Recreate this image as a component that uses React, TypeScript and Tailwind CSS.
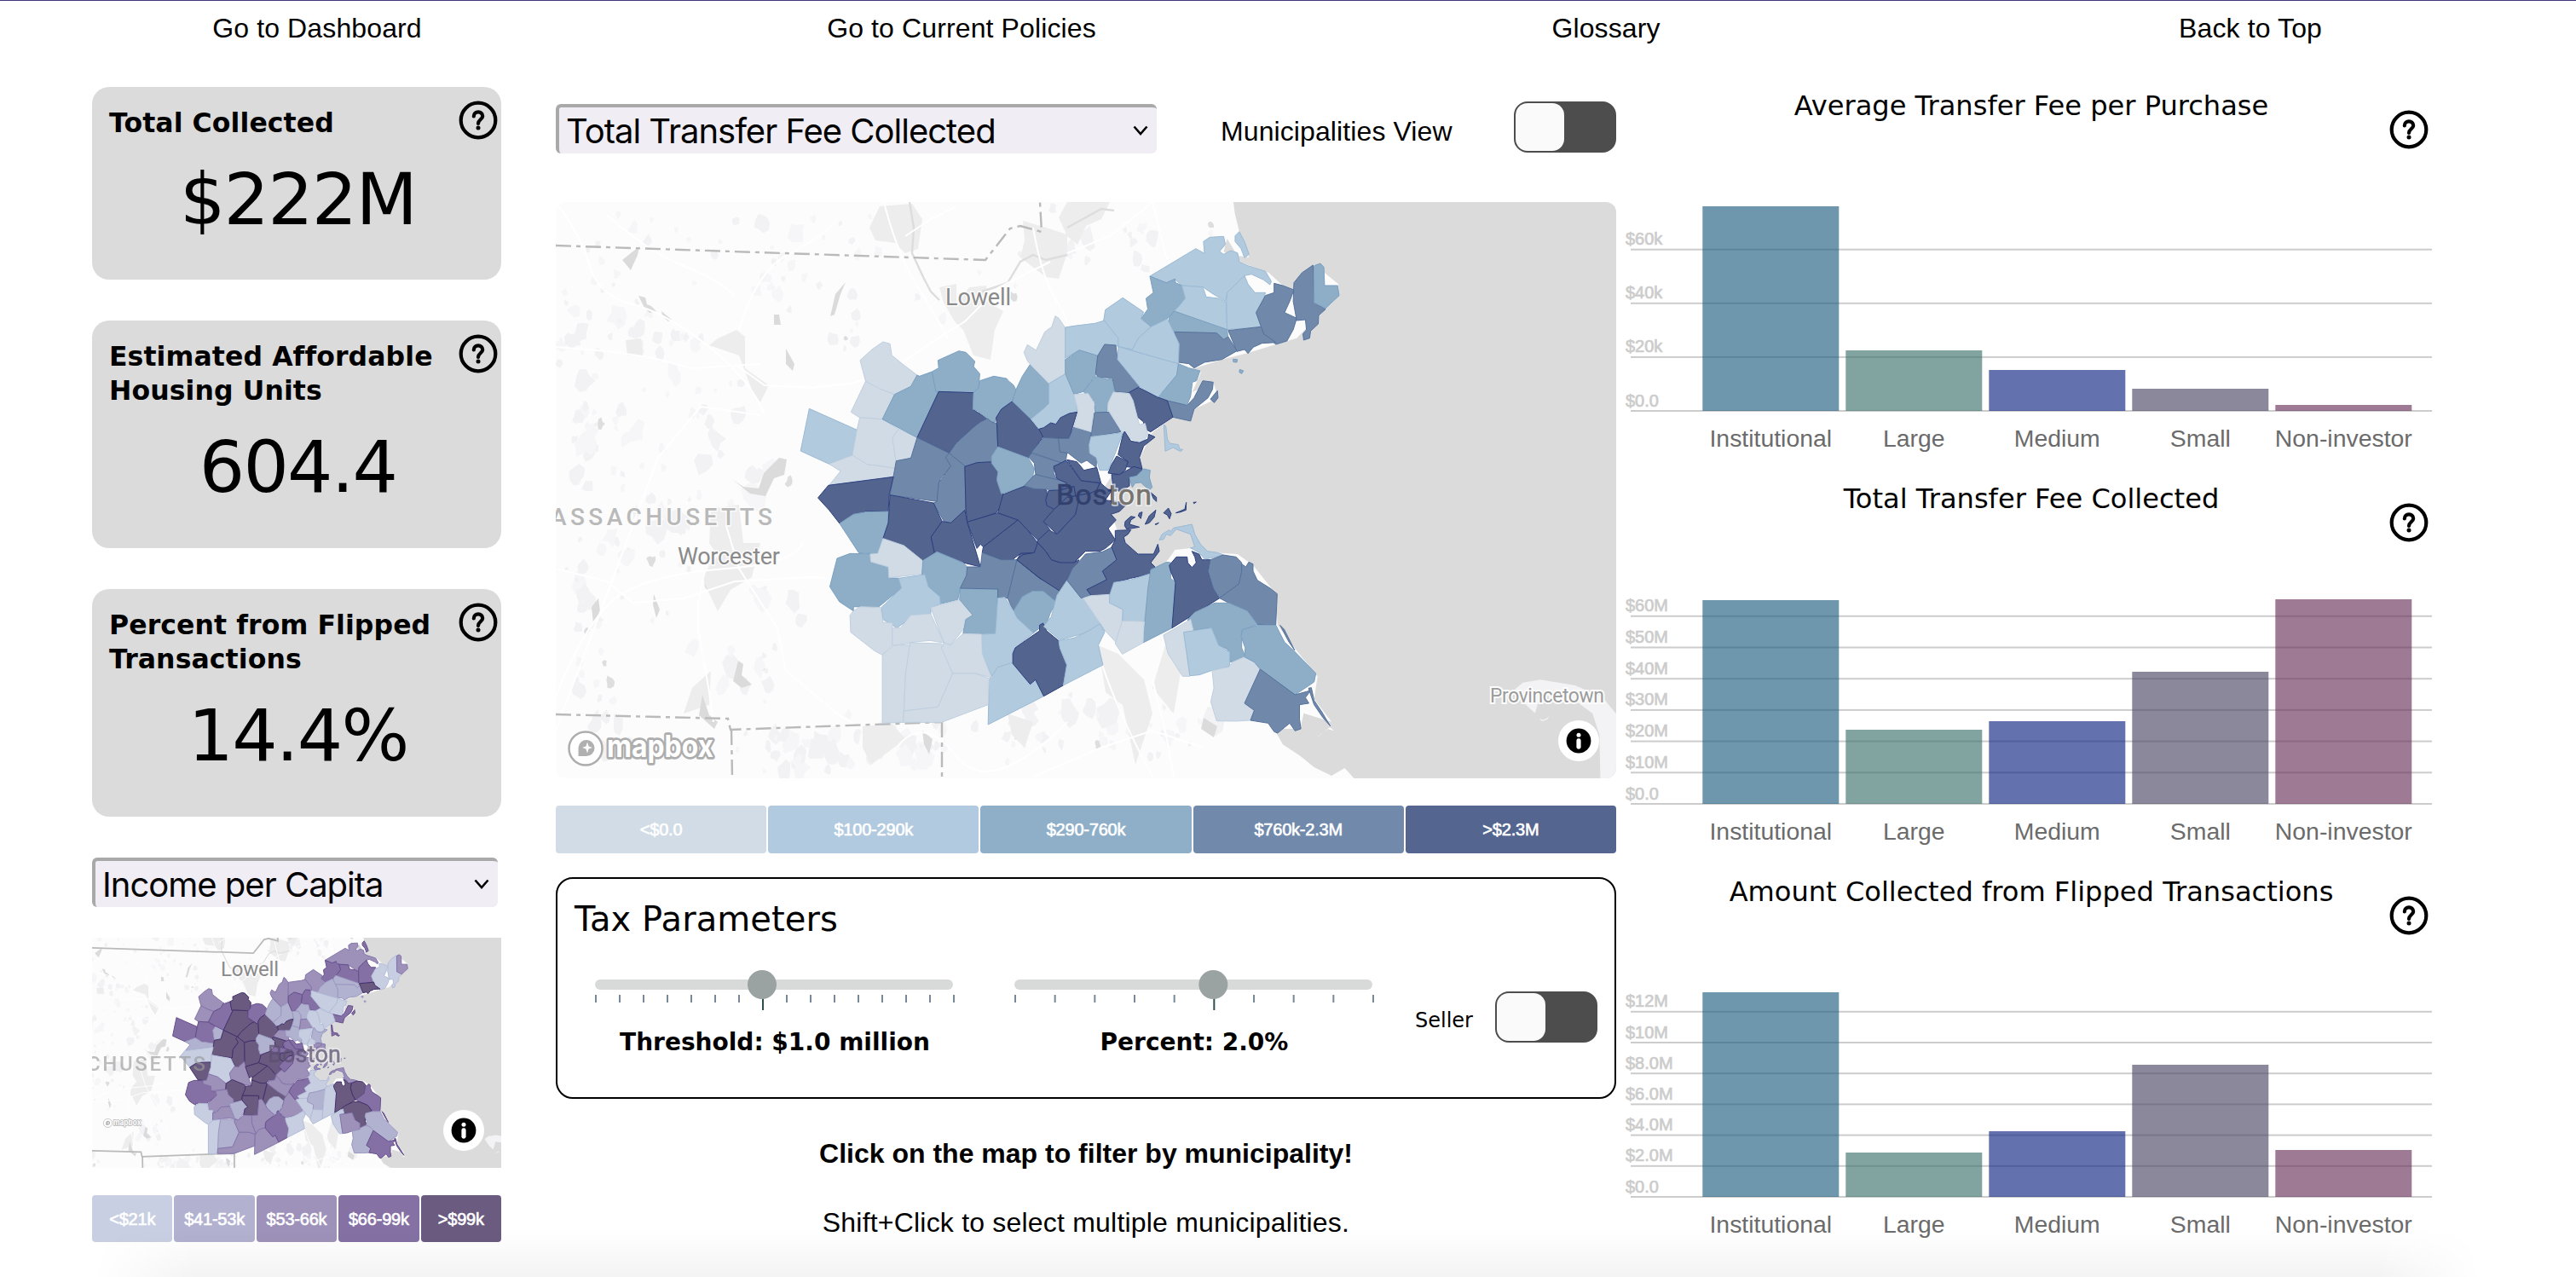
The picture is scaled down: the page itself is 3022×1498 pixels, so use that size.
import React from "react";

/* ------------------------------------------------------------------ */
/* Map data                                                            */
/* ------------------------------------------------------------------ */

const BLUES = ["#d1dbe6", "#b1cade", "#8eaec8", "#7089aa", "#53648e"];
const BLUE_LINES = ["#bfcfdf", "#9bbad5", "#7a9fbf", "#56729c", "#2c407f"];
const PURPLES = ["#c7cee2", "#b1b1d0", "#9d91ba", "#8470a4", "#6a5a80"];
const PURPLE_LINES = ["#b3bdd8", "#9b98c1", "#8375aa", "#664f8d", "#43316b"];

type Town = [number, number, string];

/* Survey sheets: every sheet keeps its towns in its own local grid. */
const SHEETS: { transform: string; towns: Town[] }[] = [
  {
    transform: "translate(-12 -17) scale(0.408163 0.333333)",
    towns: [
      [1, 3, "758,778 895,853 882,942 815,973 733,927"],
      [0, 2, "904,608 938,570 970,543 990,550 995,590 1030,625 1068,660 1050,700 1003,728 960,708 920,682"],
      [0, 2, "920,682 960,708 1003,728 968,815 903,810 878,790"],
      [0, 3, "903,810 968,815 1015,850 997,880 1007,962 1003,988 950,978 925,975 882,942 895,853"],
      [0, 1, "1015,850 1068,880 1050,952 1007,962 997,880"],
      [0, 1, "882,942 925,975 950,978 1003,988 1002,1017 815,1048 848,998 815,973"],
      [2, 3, "1111,648 1122,718 1130,718 1068,880 968,815 1003,728 1050,700 1068,660 1075,664"],
      [2, 4, "1128,608 1188,575 1208,580 1234,612 1230,630 1248,655 1245,705 1230,722 1122,718 1111,648 1130,635"],
      [4, 4, "1130,718 1230,722 1228,780 1240,790 1270,813 1250,825 1232,842 1180,900 1160,935 1068,880"],
      [2, 3, "1248,680 1288,664 1325,672 1330,680 1345,695 1352,712 1342,752 1310,780 1295,810 1292,825 1282,825 1240,785 1228,780 1230,722 1245,705"],
      [3, 4, "1270,813 1282,825 1297,830 1300,912 1282,945 1290,965 1240,968 1207,982 1160,935 1180,900 1232,842 1250,825"],
      [4, 4, "1342,752 1390,810 1432,873 1405,920 1388,952 1300,912 1297,830 1295,810 1310,780"],
      [2, 1, "1393,622 1447,690 1447,760 1430,780 1395,815 1342,752 1352,712 1370,665"],
      [0, 2, "1375,580 1385,553 1410,573 1435,508 1455,490 1465,452 1475,460 1493,492 1500,530 1493,600 1495,655 1447,690 1393,622 1385,610"],
      [1, 1, "1495,655 1525,740 1528,790 1480,810 1467,830 1432,850 1418,850 1395,815 1430,780 1447,760 1447,690"],
      [4, 4, "1528,790 1505,883 1432,883 1418,850 1432,845 1452,828 1467,833 1480,810 1505,795"],
      [3, 4, "1068,880 1160,935 1150,950 1165,980 1135,1025 1130,1040 1125,1105 990,1082 1008,962 1050,952"],
      [3, 4, "1160,935 1205,980 1208,1130 1200,1170 1150,1185 1115,1110 1125,1105 1130,1040 1165,980 1150,950"],
      [4, 4, "1205,982 1240,968 1290,965 1300,1000 1297,1030 1315,1080 1315,1110 1295,1145 1212,1178 1208,1130"],
      [2, 1, "1300,912 1388,952 1405,990 1400,1018 1377,1050 1310,1078 1297,1030 1300,1000 1282,970 1282,945"],
    ],
  },
  {
    transform: "translate(-12 323) scale(0.408163 0.333333)",
    towns: [
      [4, 0, "813,28 1000,-2 988,60 985,120 920,120 845,162 815,115 783,72"],
      [2, 4, "845,162 885,130 920,122 985,120 985,165 970,215 955,270 900,265"],
      [4, 0, "990,62 1115,90 1140,155 1108,210 1118,265 1085,292 1045,262 970,215 985,160"],
      [4, 2, "1140,155 1165,160 1205,115 1212,157 1250,315 1200,300 1120,282 1118,265 1108,210"],
      [4, 4, "1212,157 1300,125 1358,150 1258,245 1250,235 1240,250"],
      [4, 4, "1300,125 1315,60 1390,25 1440,45 1445,95 1470,115 1432,155 1450,185 1418,225 1385,185 1358,150"],
      [4, 4, "1358,150 1385,185 1418,235 1405,265 1365,268 1340,292 1310,290 1255,265 1258,245"],
      [2, 3, "838,285 875,268 955,270 935,295 985,315 987,353 1018,355 1023,390 955,458 885,455 885,470 845,438 817,385"],
      [0, 2, "970,215 1030,240 1083,292 1082,340 987,353 985,315 935,297 933,270 955,268"],
      [2, 4, "1085,292 1125,262 1200,300 1212,315 1210,345 1192,390 1185,430 1135,445 1130,415 1095,380 1082,340"],
      [1, 2, "1015,355 1090,342 1100,385 1133,420 1135,445 1108,458 1107,480 1060,485 1010,530 970,500 965,458 1023,390"],
      [0, 0, "885,470 905,455 963,458 970,510 997,512 997,590 968,625 945,610 877,545 875,485"],
      [0, 2, "997,530 1020,530 1050,485 1107,480 1145,582 1105,574 1070,578 997,592"],
      [0, 1, "1107,458 1192,430 1228,485 1205,500 1210,520 1165,590 1145,582"],
      [2, 4, "1192,392 1300,393 1295,552 1200,550 1208,500 1228,485 1190,430"],
      [3, 4, "1212,315 1250,315 1255,265 1310,290 1355,290 1328,425 1300,425 1300,393 1192,390 1210,345"],
      [3, 4, "1355,290 1420,355 1445,370 1480,400 1470,440 1430,400 1405,400 1345,470 1328,425"],
      [4, 2, "1355,290 1365,268 1405,265 1418,235 1450,270 1475,300 1500,362 1482,398 1445,370 1420,355"],
      [2, 1, "1345,470 1370,420 1400,400 1430,400 1468,438 1450,480 1440,515 1420,530 1402,548 1355,495"],
      [1, 2, "1300,425 1320,422 1345,470 1355,495 1402,548 1350,600 1345,655 1310,665 1282,700 1255,620 1253,552 1293,550"],
      [1, 2, "1282,700 1300,668 1340,652 1393,728 1408,712 1432,770 1272,870 1275,710"],
      [4, 3, "1420,540 1420,520 1430,513 1440,540 1475,575 1478,600 1490,625 1498,660 1488,732 1432,770 1408,712 1393,728 1343,655 1343,620 1350,600 1402,555"],
      [0, 0, "968,625 1000,592 1048,588 1035,690 1028,862 968,865"],
      [0, 1, "1048,582 1138,585 1170,690 1128,808 1030,822 1035,690"],
      [0, 2, "1145,582 1165,590 1200,550 1253,552 1255,620 1282,705 1235,690 1170,690 1138,600"],
      [0, 2, "1170,690 1235,690 1275,708 1272,800 1138,862 1028,862 1030,822 1128,808"],
    ],
  },
  {
    transform: "translate(608 -17) scale(0.408163 0.333333)",
    towns: [
      [1, 2, "218,312 350,215 375,232 372,190 390,175 430,172 435,200 418,225 430,235 450,222 470,230 475,262 500,275 550,295 567,330 563,342 545,325 510,305 490,310 440,370 436,400 400,375 370,350 310,345 290,322 265,335"],
      [1, 3, "475,155 490,190 503,235 490,247 480,215 463,190 463,170"],
      [2, 3, "218,312 265,335 290,322 292,335 310,345 322,390 300,420 270,460 222,490 192,462 212,428 207,390 228,370"],
      [1, 3, "310,345 370,350 380,385 415,390 438,405 440,500 288,435 300,420 320,390"],
      [1, 3, "440,370 490,310 500,340 520,370 550,370 545,390 525,440 540,490 440,500 438,405"],
      [3, 0, "575,337 600,345 632,360 620,400 605,440 640,460 630,500 612,540 580,552 545,515 523,440 550,380 575,370"],
      [3, 0, "687,273 690,405 723,428 703,450 702,480 680,505 677,530 660,537 658,515 668,500 665,465 640,468 630,400 632,335 655,300"],
      [2, 2, "690,275 708,267 718,280 720,345 757,345 762,380 740,405 723,425 690,405"],
      [2, 1, "288,435 440,500 443,530 430,538 410,512 290,508 268,490 275,455"],
      [3, 1, "288,508 410,512 430,535 443,525 468,575 425,605 375,615 345,635 330,620 300,615 300,550"],
      [3, 4, "443,503 538,490 545,515 580,545 540,548 515,562 500,584 490,570 468,577"],
      [1, 2, "90,430 140,388 200,438 192,462 220,490 185,530 168,570 127,560 125,530 85,468"],
      [1, 2, "-25,492 0,487 60,478 87,468 127,530 127,560 120,555 88,552 68,592 15,572 -25,600"],
      [2, 3, "-25,605 15,572 68,592 62,660 27,718 0,728 -25,655"],
      [3, 3, "68,592 88,552 120,555 125,605 188,700 157,722 118,718 110,670 70,668 62,655"],
      [1, 1, "127,560 168,570 185,530 222,490 268,462 302,550 300,620 240,600"],
      [1, 0, "127,560 240,600 300,620 295,660 240,738 188,700 125,605"],
      [2, 0, "300,620 330,635 362,645 352,680 340,685 335,735 325,765 268,750 243,738 295,660"],
      [3, 3, "268,750 325,767 345,740 370,680 400,685 398,710 385,740 345,780 335,822 284,808"],
      [3, 3, "412,715 414,740 403,757 392,745"],
      [1, 3, "258,835 264,840 268,885 275,900 300,905 303,920 313,922 306,929 285,915 262,928 261,900"],
      [2, 1, "62,665 95,675 108,672 117,718 97,760 95,790 60,790 60,755 42,740 27,718"],
      [4, 0, "157,722 185,703 240,738 268,750 284,808 220,860 198,845 200,825 183,808 170,750"],
      [2, 1, "457,604 469,605 468,615 458,614"],
      [2, 1, "476,640 487,645 482,655 475,650"],
    ],
  },
  {
    transform: "translate(528 223) scale(0.333333)",
    towns: [
      [3, 2, "133,160 185,163 192,210 215,215 212,235 205,252 90,212"],
      [3, 1, "185,163 222,163 240,122 300,142 293,185 295,200 320,225 318,265 285,240 265,250 220,215 190,210"],
      [0, 1, "240,8 290,5 312,40 300,140 240,122 255,70"],
      [3, 2, "312,72 365,70 405,140 300,157"],
      [0, 0, "378,0 435,5 448,30 470,115 490,110 500,150 480,180 430,160 405,135 358,60 360,38"],
      [1, 0, "300,157 412,143 385,215 360,275 330,275 318,230 295,215 293,185"],
      [4, 1, "412,150 418,138 432,160 440,172 470,178 500,165 503,148 525,158 485,190 470,230 480,270 420,262 430,245 395,220"],
      [4, 0, "390,225 430,245 420,275 400,290 360,285 372,255"],
      [4, 2, "372,290 400,290 450,262 480,270 470,295 435,300 435,330 400,350 378,335"],
      [3, 4, "90,215 205,252 170,258 168,285 180,310 105,290 100,250 80,228"],
      [3, 3, "105,290 180,308 190,310 215,320 195,345 100,340 65,330 100,292"],
      [4, 3, "215,238 250,245 275,275 320,265 335,320 265,312"],
      [4, 3, "168,262 212,240 265,312 330,320 320,345 300,355 245,365 240,332 190,345 215,320 180,305"],
      [4, 2, "245,365 300,355 320,345 332,318 345,330 370,350 350,380 430,390 400,420 370,430 388,450 360,480 385,520 350,550 330,560 280,560 240,600 215,620 190,600 160,590 140,560 112,530 112,522 152,485 180,500 245,430"],
      [4, 3, "250,365 254,390 245,430 180,500 132,455 170,412 215,370"],
      [4, 4, "150,347 190,345 240,332 245,365 215,370 170,412 145,400 140,380"],
      [4, 2, "112,530 140,560 160,590 190,600 240,600 257,590 250,615 230,630 215,662 190,700 120,655 38,590 60,572 100,565"],
      [1, 2, "215,662 245,690 275,725 350,840 320,825 270,850 190,872 133,825 160,790 180,715"],
      [3, 3, "280,570 340,562 375,545 390,590 340,630 355,660 285,695 300,715 265,725 215,662 235,620 255,600"],
      [4, 0, "385,520 385,487 440,485 430,500 415,510 420,530 465,570 520,570 535,535 540,560 510,600 525,615 510,640 440,655 385,670 365,715 300,715 285,695 355,660 340,630 390,590 372,545"],
      [0, 0, "272,725 300,716 365,712 365,740 412,765 410,805 387,880 350,840"],
      [1, 1, "380,670 440,660 505,640 520,645 503,690 487,807 410,805 412,765 365,742 365,715"],
      [2, 0, "510,625 565,598 580,600 580,655 598,670 585,830 483,882 500,690"],
      [0, 0, "410,805 487,807 483,882 410,922 385,885"],
      [4, 4, "600,580 638,580 640,600 655,617 670,600 665,580 655,560 680,570 690,590 720,590 712,630 730,690 752,725 585,830 597,670 580,630 575,610"],
      [1, 2, "540,520 550,500 575,485 580,490 590,478 620,472 655,465 665,500 685,535 710,560 745,565 765,572 730,582 700,588 680,565 650,548 665,545 650,500 600,482 580,505 565,500 555,518"],
      [3, 4, "720,590 765,573 810,580 830,600 830,650 820,675 752,725 730,690 712,630"],
      [3, 3, "830,630 830,605 845,615 855,598 870,605 870,630 885,662 930,690 955,710 950,820 885,817 850,770 785,742 752,725 820,675"],
      [2, 4, "665,775 735,742 785,742 850,770 885,817 830,840 830,900 845,935 790,950 780,905 730,880 715,830 650,840 640,800"],
      [2, 2, "435,300 460,295 485,270 508,275 505,300 515,335 505,345 475,318 455,320 445,335"],
      [4, 2, "470,425 480,422 475,445 466,435"],
      [4, 2, "490,465 505,435 528,415 522,440 505,460"],
      [4, 2, "418,470 420,455 440,437 455,440 440,450 435,465 470,475 440,480 425,482"],
      [4, 2, "555,425 572,408 582,428 576,446 568,432"],
      [4, 2, "598,425 630,412 635,388 634,415 615,422"],
      [4, 2, "660,388 670,387 662,392"],
      [4, 2, "510,353 530,370 530,385 520,375"],
      [4, 2, "525,465 538,460 530,466"],
    ],
  },
  {
    transform: "translate(608 323) scale(0.408163 0.333333)",
    towns: [
      [1, 0, "-44,575 0,565 35,545 75,515 88,545 70,590 83,660 -31,732 -21,660 -41,600"],
      [0, 0, "257,555 335,500 343,540 315,545 333,700 312,700 270,620"],
      [1, 2, "315,545 395,530 415,590 447,615 447,665 395,680 360,695 333,698"],
      [0, 1, "397,680 425,672 445,668 455,650 490,632 520,650 535,675 490,795 518,820 507,855 465,858 410,857 393,790 402,740"],
      [2, 1, "485,535 530,520 580,520 605,580 632,610 695,690 690,720 660,745 635,765 535,675 518,650 490,632 492,600 480,560"],
      [3, 3, "535,675 635,765 680,750 665,775 675,795 648,800 648,850 652,885 635,892 620,865 585,900 575,895 558,865 507,855 518,820 490,795"],
      [3, 3, "674,742 682,740 690,785 712,825 737,876 715,845 690,800"],
      [3, 3, "592,520 604,535 634,608 618,580"],
    ],
  },
];

/* Deterministic forest / lake patches for the basemap. */
function makePatches() {
  let s = 20240117;
  const rnd = () => {
    s = (s * 1103515245 + 12345) % 2147483648;
    return s / 2147483648;
  };
  const out: { d: string; fill: string }[] = [];
  const clusters: [number, number, number, number, number][] = [
    [40, 110, 60, 70, 22], [130, 160, 60, 80, 16], [70, 280, 80, 60, 26], [30, 230, 30, 80, 12],
    [180, 250, 60, 60, 14], [270, 90, 80, 60, 12], [170, 40, 130, 35, 10], [110, 380, 90, 50, 18],
    [200, 480, 110, 90, 16], [50, 470, 60, 90, 22], [60, 600, 60, 70, 16], [280, 640, 90, 30, 24],
    [400, 630, 120, 35, 30], [560, 620, 100, 45, 22], [700, 620, 90, 45, 20], [340, 160, 70, 70, 10],
    [480, 120, 70, 60, 8], [620, 40, 90, 40, 12], [720, 60, 60, 60, 12], [330, 45, 70, 40, 8],
    [230, 330, 70, 50, 12], [250, 560, 60, 50, 8],
  ];
  for (const [cx, cy, rx, ry, n] of clusters) {
    for (let i = 0; i < n; i++) {
      const x = cx + (rnd() + rnd() - 1) * rx;
      const y = cy + (rnd() + rnd() - 1) * ry;
      const r = 3 + rnd() * rnd() * 17;
      const k = 9;
      let d = "";
      for (let j = 0; j < k; j++) {
        const a = (j / k) * Math.PI * 2;
        const q = r * (0.5 + rnd() * 0.6);
        d += (j ? "L" : "M") + (x + Math.cos(a) * q * 0.85).toFixed(1) + " " + (y + Math.sin(a) * q * 1.15).toFixed(1);
      }
      const t = rnd();
      const fill = t < 0.05 && r < 8 ? "#dedede" : t < 0.55 ? "#f2f2f5" : "#f6f6f8";
      out.push({ d: d + "Z", fill });
    }
  }
  return out;
}
const PATCHES = makePatches();

const URBAN = [
  "M380 5 418 2 430 20 425 55 410 60 398 48 375 45 368 30Z",
  "M470 120 485 100 505 98 508 118 525 128 515 150 510 185 490 180 478 150 468 140 455 118 450 100 470 96Z",
  "M548 22 575 30 600 38 600 60 590 90 575 88 545 65 550 45Z",
  "M600 0 650 0 640 20 622 28 612 50 600 40 590 18Z",
  "M190 160 212 150 222 158 222 195 250 215 240 235 230 220 215 180 180 168Z",
  "M82 162 100 160 102 180 84 180Z",
  "M182 360 215 355 220 400 240 400 230 440 205 455 190 480 178 455 172 440 190 415 180 400Z",
  "M160 570 182 550 180 590 150 600Z",
  "M636 520 660 530 690 560 700 600 680 660 665 590 645 575Z",
  "M715 520 735 540 725 600 700 570Z",
  "M360 615 395 612 410 630 390 645 370 660 360 640Z",
  "M530 600 560 610 550 640 535 625Z",
];
const LAKES = [
  "M96 62 98 52 88 60 78 68 88 80Z",
  "M97 110 105 112 107 120 112 122 118 128 110 130 104 124Z",
  "M124 128 136 138 132 140 125 134Z",
  "M340 94 334 108 327 132 322 134 328 108Z",
  "M256 132 262 132 264 144 256 144Z",
  "M270 172 280 190 278 198 270 190Z",
  "M244 318 262 300 271 302 268 320 256 324 246 345 228 342 208 326 220 334 238 336Z",
  "M214 538 220 542 218 555 230 566 218 570 208 562Z",
  "M115 460 122 478 118 488 114 472Z",
  "M50 465 52 480 44 495 42 475Z",
  "M172 578 180 602 190 610 186 618 168 602Z",
  "M760 605 776 615 772 628 757 618Z",
  "M430 620 442 630 438 648 432 636Z",
];
const ROADS = [
  "M0 0 Q30 40 40 75 T90 120 T180 170 T245 250",
  "M60 15 Q110 60 150 75 T210 110",
  "M0 170 L60 175 110 182 160 195 240 190",
  "M210 190 L245 215 300 218 350 212 390 200 440 165 480 140 520 100 580 70",
  "M215 150 Q235 80 275 60 T330 20",
  "M0 430 L60 445 90 470 150 465 210 445 300 440 360 445",
  "M0 580 Q40 480 80 458 T200 430 T290 400",
  "M200 380 L215 430 260 500 270 550 330 600 350 612",
  "M180 420 Q160 470 170 520 T185 610",
  "M385 0 Q400 60 425 100 T460 160",
  "M410 40 L440 20 470 5",
  "M490 180 L500 220 520 240",
  "M560 30 Q570 90 590 120 T600 200",
  "M600 60 L650 40 700 0",
  "M700 0 L715 60 730 100",
  "M640 540 Q660 600 700 674",
  "M700 560 L715 620 725 674",
  "M560 674 L640 640 700 620 760 640",
  "M0 620 L120 300 170 240 240 250",
  "M400 640 Q430 600 470 650 T600 610",
];

const OCEAN =
  "457,40 462,90 475,155 503,245 470,240 440,180 430,225 478,262 560,300 600,345 635,360 690,270 760,340 720,430 640,530 580,552 500,582 425,605 345,637 365,650 340,720 400,685 415,740 345,780 335,822 284,808 225,862 190,950 160,1010 130,1040 110,1010 90,1050 120,1090 106,1150 120,1190 131,1240 145,1275 190,1290 215,1360 270,1310 290,1275 330,1270 400,1285 470,1290 515,1330 580,1430 585,1540 640,1630 700,1720 690,1800 740,1880 660,1850 650,1905 575,1905 600,1960 650,2000 690,2040 740,2070 778,2043 805,2080 1600,2100 1600,20";

function Basemap({ compact }: { compact?: boolean }) {
  return (
    <>
      <rect x={-40} y={-40} width={1340} height={780} fill="#fcfcfc" />
      {PATCHES.map((p, i) => (
        <path key={i} d={p.d} fill={p.fill} />
      ))}
      {URBAN.map((d, i) => (
        <path key={i} d={d} fill="#ededed" />
      ))}
      {LAKES.map((d, i) => (
        <path key={i} d={d} fill="#dbdbdb" />
      ))}
      <path
        d="M415 0 L420 30 418 60 425 75 432 90 440 105 450 115 M500 105 L530 95 545 70 560 62 575 68 600 62 M600 30 L640 8 655 10"
        fill="none"
        stroke="#dddddd"
        strokeWidth={2.4}
      />
      {ROADS.map((d, i) => (
        <path key={i} d={d} fill="none" stroke="#ffffff" strokeWidth={2} />
      ))}
      <g
        fill="none"
        stroke="#bababa"
        strokeWidth={compact ? 4 : 2.4}
        strokeDasharray={compact ? undefined : "18 6 5 6"}
      >
        <path d="M0 51 L504 68 533 31 545 28 570 35 568 0" />
        <path d="M0 601 L202 606 205 619 453 610" />
        <path d="M206 619 L207 676 M453 610 V676" />
      </g>
      <g transform="translate(608 -17) scale(0.408163 0.333333)">
        <polygon points={OCEAN} fill="#dbdbdb" />
        <path
          d="M1268 1765 L1290 1742 1340 1732 1440 1752 1520 1795 1570 1870 1570 2100 1513 2100 1510 1925 1490 1850 1440 1805 1340 1785 1325 1850 1300 1822Z"
          fill="#f3f3f5"
        />
        <path d="M1336 1870 Q1352 1878 1366 1860 L1360 1872 1345 1878Z" fill="#f3f3f5" />
        <path d="M697 1935 L735 1900 748 1912 728 1905 704 1930Z" fill="#fcfcfc" />
      </g>
    </>
  );
}

function Towns({ palette, lines, pick }: { palette: string[]; lines: string[]; pick: 0 | 1 }) {
  return (
    <>
      {SHEETS.map((sheet, i) => (
        <g key={i} transform={sheet.transform} strokeLinejoin="round">
          {sheet.towns.map((t, j) => (
            <polygon
              key={j}
              points={t[2]}
              fill={palette[t[pick]]}
              stroke={lines[t[pick]]}
              strokeWidth={1}
              vectorEffect="non-scaling-stroke"
            />
          ))}
        </g>
      ))}
    </>
  );
}

function MapboxLogo({ transform }: { transform: string }) {
  return (
    <g transform={transform}>
      <circle cx={21} cy={21} r={19.5} fill="#ffffff" stroke="#adadad" strokeWidth={2.5} />
      <path d="M12.5 30 V20 A9.5 9.5 0 1 1 22 30Z" fill="#b0b0b0" />
      <path d="M23 13.500 L24.6 18.4 29 20 24.6 21.6 23 26.500 21.400 21.6 17 20 21.4 18.4Z" fill="#ffffff" />
      <text
        x={46}
        y={31}
        fontFamily="Inter, sans-serif"
        fontWeight={700}
        fontSize={36}
        textLength={125}
        lengthAdjust="spacingAndGlyphs"
        fill="#ffffff"
        stroke="#adadad"
        strokeWidth={5.5}
        paintOrder="stroke"
        strokeLinejoin="round"
      >
        mapbox
      </text>
    </g>
  );
}

function InfoButton() {
  return (
    <button className="flex size-12 items-center justify-center rounded-full bg-white" aria-label="Attribution">
      <svg width="30" height="30" viewBox="0 0 30 30">
        <circle cx="15" cy="15" r="14.4" fill="#000" />
        <circle cx="15" cy="8.2" r="2.5" fill="#fff" />
        <rect x="12.4" y="12.300" width="5.2" height="12.4" rx="2.4" fill="#fff" />
      </svg>
    </button>
  );
}

const LABEL = "Roboto, 'Open Sans', sans-serif";

function MainMap() {
  return (
    <div className="relative mt-[57px] h-[676px] w-[1244px] overflow-hidden rounded-xl">
      <svg className="block" width="1244" height="676" viewBox="0 0 1244 676">
        <Basemap />
        <g fontFamily={LABEL} stroke="#fcfcfc" strokeWidth={3} paintOrder="stroke">
          <text x={457} y={121} fontSize={27} fill="#8a8a8a" textLength={77}>Lowell</text>
          <text x={143} y={425} fontSize={27} fill="#8a8a8a" textLength={120}>Worcester</text>
          <text x={-6} y={379} fontSize={28} fontWeight={500} fill="#b9b9b9" textLength={260}>ASSACHUSETTS</text>
          <text x={1096} y={587} fontSize={23} fill="#9b9b9b" strokeWidth={4} textLength={134}>Provincetown</text>
        </g>
        <Towns palette={BLUES} lines={BLUE_LINES} pick={0} />
        <g fontFamily={LABEL} fontSize={34}>
          <clipPath id="harbor"><rect x={652} y={320} width={80} height={50} /></clipPath>
          <clipPath id="inland"><rect x={560} y={320} width={92} height={50} /></clipPath>
          <text x={587} y={355} fill="none" stroke="#f4f4f4" strokeWidth={4} textLength={112} clipPath="url(#harbor)" opacity={0.7}>Boston</text>
          <text x={587} y={355} fill="#32406d" stroke="#32406d" strokeWidth={0.6} textLength={112} clipPath="url(#inland)">Boston</text>
          <text x={587} y={355} fill="#77746f" stroke="#77746f" strokeWidth={0.6} textLength={112} clipPath="url(#harbor)">Boston</text>
        </g>
        <MapboxLogo transform="translate(14 620)" />
      </svg>
      <div className="absolute left-[1176px] top-[608px]">
        <InfoButton />
      </div>
    </div>
  );
}

function SmallMap() {
  return (
    <div className="relative mt-9 h-[270px] w-[480px] overflow-hidden">
      <svg className="block" width="480" height="270" viewBox="0 0 480 270">
        <g transform="translate(-30.8 -11.3) scale(0.4365 0.4333)">
          <Basemap compact />
        </g>
        <g fontFamily={LABEL} stroke="#fcfcfc" strokeWidth={3} paintOrder="stroke">
          <text x={151} y={45} fontSize={24} fill="#8a8a8a" textLength={68}>Lowell</text>
        </g>
        <g transform="translate(-30.8 -11.3) scale(0.4365 0.4333)">
          <Towns palette={PURPLES} lines={PURPLE_LINES} pick={1} />
        </g>
        <text x={-6} y={156} fontFamily={LABEL} fontSize={24} fontWeight={500} fill="#9a9a9a" opacity={0.65} textLength={139}>CHUSETTS</text>
        <g fontFamily={LABEL} fontSize={27}>
          <clipPath id="harbor-sm"><rect x={254} y={115} width={50} height={50} /></clipPath>
          <text x={206} y={146} fill="none" stroke="#ededed" strokeWidth={4} textLength={86} clipPath="url(#harbor-sm)" opacity={0.8}>Boston</text>
          <text x={206} y={146} fill="#5c5070" stroke="#5c5070" strokeWidth={0.5} opacity={0.75} textLength={86}>Boston</text>
        </g>
        <MapboxLogo transform="translate(13 212) scale(0.26)" />
      </svg>
      <div className="absolute left-[412px] top-[202px]">
        <InfoButton />
      </div>
    </div>
  );
}

/* ------------------------------------------------------------------ */
/* Controls                                                            */
/* ------------------------------------------------------------------ */

function HelpIcon() {
  return (
    <svg width="46" height="46" viewBox="-23 -23 46 46" fill="none" stroke="#000">
      <circle r="20.300" strokeWidth="4.2" />
      <path d="M-5.200 -4.600 C-5.200 -11.400 5.200 -11.400 5.200 -4.700 C5.200 -1.200 0 -0.600 0 4" strokeWidth="4.2" strokeLinecap="round" />
      <circle cy="9" r="2.5" fill="#000" stroke="none" />
    </svg>
  );
}

function StatCard({ lines, value, className }: { lines: string[]; value: string; className: string }) {
  return (
    <section className={"relative rounded-[20px] bg-[#dbdbdb] pl-5 pt-[22px] " + className}>
      <h2 className="font-['DejaVu_Sans'] text-[31.5px] font-bold leading-[40px] tracking-[0.1px]">
        {lines.map((l) => (
          <span key={l} className="block whitespace-nowrap">{l}</span>
        ))}
      </h2>
      <p className="mt-[21px] pr-[17px] text-center font-['DejaVu_Sans'] text-[84px] leading-[98px] tracking-[-1.8px]">{value}</p>
      <div className="absolute right-1 top-[16px]">
        <HelpIcon />
      </div>
    </section>
  );
}

function Select({ label, className }: { label: string; className: string }) {
  return (
    <div
      className={
        "flex h-[58px] items-center justify-between rounded-md border-l-4 border-t-4 border-[#a9a9a9] bg-[#f0edf5] pl-[8px] pr-[10px] " +
        className
      }
    >
      <span className="whitespace-nowrap pt-px font-['Inter'] text-[40px] leading-[48px] tracking-[-1px]">{label}</span>
      <svg width="18" height="12" viewBox="0 0 18 12" fill="none" stroke="#000" strokeWidth="2.6">
        <path d="M1.500 1.500 L9 10 L16.500 1.500" />
      </svg>
    </div>
  );
}

function Toggle() {
  return (
    <div className="h-[60px] w-[120px] rounded-[16px] border-2 border-[#4d4d4d] bg-[#4d4d4d]">
      <div className="h-full w-[57px] rounded-[14px] bg-[#fafafa]" />
    </div>
  );
}

function Legend({ items, className }: { items: [string, string][]; className: string }) {
  return (
    <div className={"grid grid-cols-5 gap-[2px] " + className}>
      {items.map(([label, color]) => (
        <div
          key={label}
          className="flex items-center justify-center rounded font-['Liberation_Sans'] text-[20px] tracking-[-0.2px] text-white [-webkit-text-stroke:0.6px_white]"
          style={{ backgroundColor: color }}
        >
          {label}
        </div>
      ))}
    </div>
  );
}

function Slider({ label, ticks, active, className }: { label: string; ticks: number; active: number; className: string }) {
  const at = (i: number) => (i / (ticks - 1)) * 420;
  return (
    <div className={"w-[422px] " + className}>
      <svg className="block overflow-visible" width="422" height="56" viewBox="0 0 422 56">
        <rect x="0" y="17" width="420" height="12" rx="6" fill="#d8dada" />
        {Array.from({ length: ticks }, (_, i) =>
          i === active ? (
            <rect key={i} x={at(i)} y="35" width="2" height="18" fill="#2f4f4f" />
          ) : (
            <rect key={i} x={at(i)} y="35" width="2" height="9" fill="#778899" />
          ),
        )}
        <circle cx={at(active)} cy="23" r="17" fill="#9ba3a2" />
      </svg>
      <p className="mt-[18px] whitespace-nowrap text-center font-['DejaVu_Sans'] text-[28px] font-bold leading-[34px]">{label}</p>
    </div>
  );
}

/* ------------------------------------------------------------------ */
/* Charts                                                              */
/* ------------------------------------------------------------------ */

const CATEGORIES = ["Institutional", "Large", "Medium", "Small", "Non-investor"];
const BAR_FILLS = [
  "rgba(33,96,130,.65)",
  "rgba(61,115,109,.65)",
  "rgba(15,38,130,.65)",
  "rgba(77,72,103,.65)",
  "rgba(107,50,90,.65)",
];

function Chart({
  title,
  ticks,
  step,
  heights,
}: {
  title: string;
  ticks: string[];
  step: number;
  heights: number[];
}) {
  return (
    <section className="relative h-[461px] w-[960px]">
      <h3 className="whitespace-nowrap pl-[14px] text-center font-['DejaVu_Sans'] text-[32.1px] leading-[38px]">{title}</h3>
      <div className="absolute left-[907px] top-[24px]">
        <HelpIcon />
      </div>
      <svg className="mt-[62px] block" width="960" height="360" viewBox="0 0 960 360" fontFamily="'Liberation Sans', Arial, sans-serif">
        {ticks.map((_, i) => (
          <rect key={i} x={17} y={276 - i * step} width={940} height={2} fill="#cccccc" />
        ))}
        {heights.map((h, i) => (
          <rect key={i} x={101.300 + i * 168} y={277 - h} width={160} height={h} fill={BAR_FILLS[i]} />
        ))}
        {ticks.map((t, i) => (
          <text key={t} x={11} y={271.500 - i * step} fontSize={20} fill="#cccccc" stroke="#cccccc" strokeWidth={0.7}>
            {t}
          </text>
        ))}
        {CATEGORIES.map((c, i) => (
          <text key={c} x={181.3 + i * 168} y={318.500} fontSize={28.400} textAnchor="middle" fill="#6b6b6b">
            {c}
          </text>
        ))}
      </svg>
    </section>
  );
}

/* ------------------------------------------------------------------ */
/* Page                                                                */
/* ------------------------------------------------------------------ */

const NAV = ["Go to Dashboard", "Go to Current Policies", "Glossary", "Back to Top"];

export default function App() {
  return (
    <div className="relative h-[1498px] w-[3022px] overflow-hidden bg-white font-['Liberation_Sans'] text-black">
      <nav className="flex h-[102px] border-t border-[#3f3678] pt-[14px] text-[32px] leading-[36px] tracking-[0.12px]">
        <div className="-ml-[6px] flex">
          {NAV.map((n) => (
            <a key={n} className="w-[756px] text-center">{n}</a>
          ))}
        </div>
      </nav>

      <main className="flex pl-[108px]">
        <aside className="w-[480px]">
          <StatCard lines={["Total Collected"]} value="$222M" className="h-[226px]" />
          <StatCard lines={["Estimated Affordable", "Housing Units"]} value="604.4" className="mt-12 h-[267px]" />
          <StatCard lines={["Percent from Flipped", "Transactions"]} value="14.4%" className="mt-12 h-[267px]" />
          <Select label="Income per Capita" className="mt-12 w-[476px]" />
          <SmallMap />
          <Legend
            className="mt-8 h-[55px]"
            items={[
              ["<$21k", "#c8cfe2"],
              ["$41-53k", "#b2b2d0"],
              ["$53-66k", "#9e92ba"],
              ["$66-99k", "#8571a4"],
              [">$99k", "#6b5b80"],
            ]}
          />
        </aside>

        <div className="ml-16 w-[1244px] pt-[17px]">
          <div className="flex h-[61px] items-start">
            <Select label="Total Transfer Fee Collected" className="mt-[3px] w-[705px]" />
            <span className="ml-[75px] mt-[17px] whitespace-nowrap text-[32px] leading-[36px] tracking-[0.1px]">Municipalities View</span>
            <div className="ml-auto">
              <Toggle />
            </div>
          </div>
          <MainMap />
          <Legend
            className="mt-8 h-14"
            items={[
              ["<$0.0", "#d2dce6"],
              ["$100-290k", "#b2cadf"],
              ["$290-760k", "#8fafc9"],
              ["$760k-2.3M", "#718aab"],
              [">$2.3M", "#54658f"],
            ]}
          />
          <section className="mt-7 h-[260px] rounded-[20px] border-2 border-black pl-5 pt-[23px]">
            <h2 className="font-['DejaVu_Sans'] text-[40px] leading-[48px] tracking-[0.1px]">Tax Parameters</h2>
            <div className="flex items-start pr-5">
              <Slider label="Threshold: $1.0 million" ticks={16} active={7} className="ml-[24px] mt-[30px]" />
              <Slider label="Percent: 2.0%" ticks={10} active={5} className="ml-[70px] mt-[30px]" />
              <span className="ml-[48px] mt-[79px] font-['DejaVu_Sans'] text-[24px] leading-[32px]">Seller</span>
              <div className="ml-auto mt-[61px]">
                <Toggle />
              </div>
            </div>
          </section>
          <p className="mt-[46px] text-center text-[32px] font-bold leading-[36px]">Click on the map to filter by municipality!</p>
          <p className="mt-[45px] text-center text-[32px] leading-[36px] tracking-[0.2px]">Shift+Click to select multiple municipalities.</p>
        </div>

        <div className="w-[960px] pt-[3px]">
          <Chart title="Average Transfer Fee per Purchase" ticks={["$0.0", "$20k", "$40k", "$60k"]} step={63.1} heights={[240, 71, 48, 26, 7]} />
          <Chart
            title="Total Transfer Fee Collected"
            ticks={["$0.0", "$10M", "$20M", "$30M", "$40M", "$50M", "$60M"]}
            step={36.700}
            heights={[239, 87, 97, 155, 240]}
          />
          <Chart
            title="Amount Collected from Flipped Transactions"
            ticks={["$0.0", "$2.0M", "$4.0M", "$6.0M", "$8.0M", "$10M", "$12M"]}
            step={36.200}
            heights={[240, 52, 77, 155, 55]}
          />
        </div>
      </main>

      <div className="pointer-events-none absolute bottom-0 left-[110px] h-14 w-[2800px] bg-linear-to-t from-black/[0.045] to-transparent [mask-image:linear-gradient(to_right,transparent,black_120px,black_2680px,transparent)]" />
    </div>
  );
}
